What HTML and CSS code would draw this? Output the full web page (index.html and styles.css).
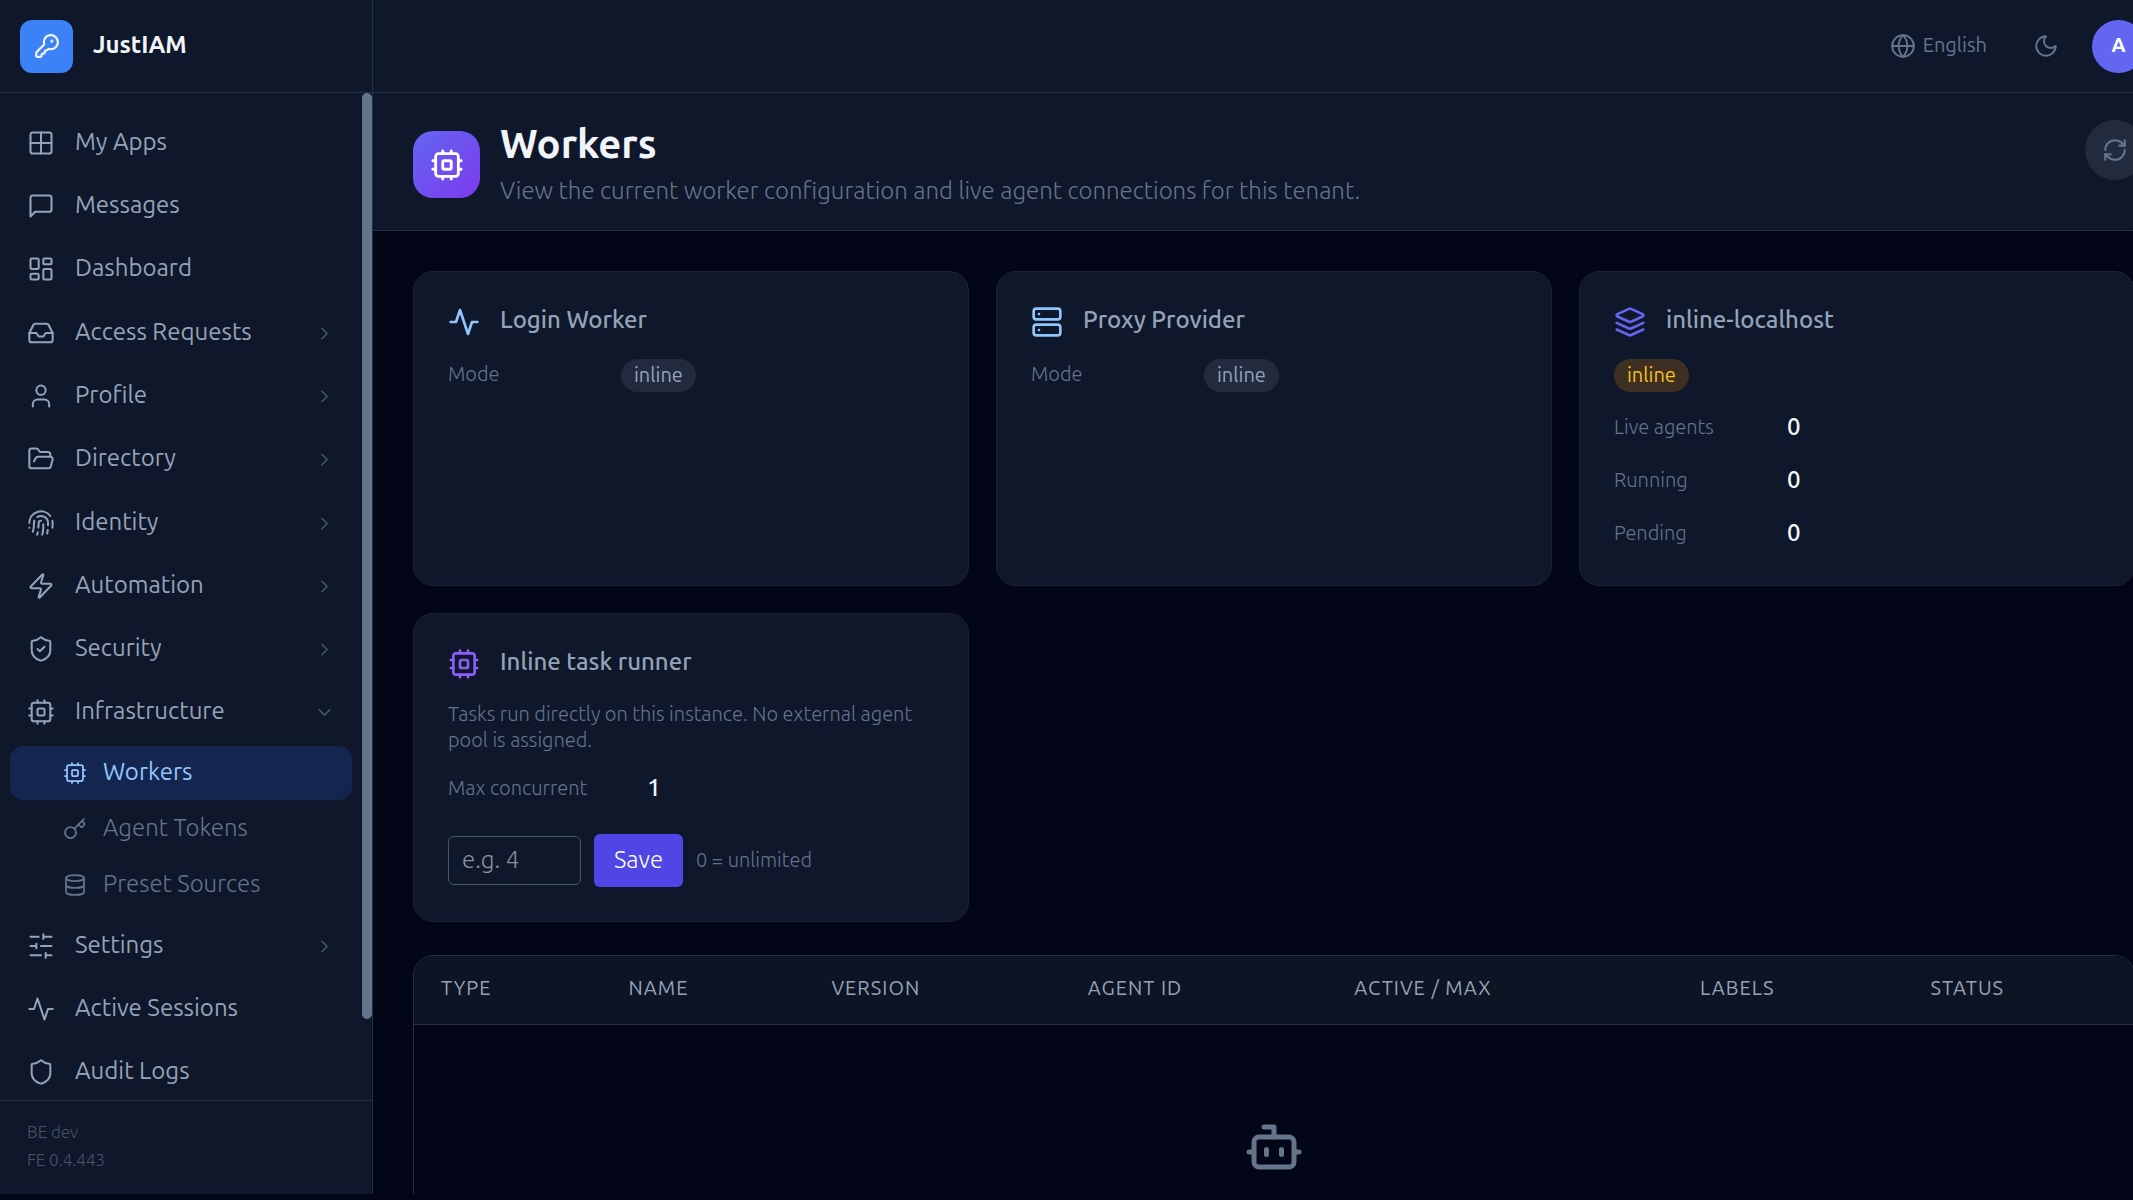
FILE: index.html
```html
<!DOCTYPE html>
<html lang="en">
<head>
<meta charset="utf-8">
<title>Workers - JustIAM</title>
<link rel="stylesheet" href="styles.css">
</head>
<body>
<svg class="sprite" aria-hidden="true">
  <symbol id="cpu" viewBox="0 0 24 24"><rect x="4" y="4" width="16" height="16" rx="2"/><rect x="9" y="9" width="6" height="6" rx="1"/><path d="M15 2v2M15 20v2M2 15h2M2 9h2M20 15h2M20 9h2M9 2v2M9 20v2"/></symbol>
  <symbol id="activity" viewBox="0 0 24 24"><path d="M22 12h-4l-3 9L9 3l-3 9H2"/></symbol>
  <symbol id="right" viewBox="0 0 24 24"><path d="m9 18 6-6-6-6"/></symbol>
  <symbol id="down" viewBox="0 0 24 24"><path d="m6 9 6 6 6-6"/></symbol>
</svg>
<div class="app">
  <aside class="sidebar">
    <div class="brand">
      <span class="logo"><svg class="icon i-26" viewBox="0 0 24 24"><path d="M2.586 17.414A2 2 0 0 0 2 18.828V21a1 1 0 0 0 1 1h3a1 1 0 0 0 1-1v-1a1 1 0 0 1 1-1h1a1 1 0 0 0 1-1v-1a1 1 0 0 1 1-1h.172a2 2 0 0 0 1.414-.586l.814-.814a6.5 6.5 0 1 0-4-4z"/><circle cx="16.5" cy="7.5" r=".5" fill="currentColor"/></svg></span>
      <span class="brand-name">JustIAM</span>
    </div>
    <nav class="nav">
      <ul class="nav-group">
        <li><a class="nav-item" href="#"><svg class="icon i-28" viewBox="0 0 24 24"><rect x="3" y="3" width="18" height="18" rx="2"/><path d="M3 12h18M12 3v18"/></svg><span>My Apps</span></a></li>
        <li><a class="nav-item" href="#"><svg class="icon i-28" viewBox="0 0 24 24"><path d="M21 15a2 2 0 0 1-2 2H7l-4 4V5a2 2 0 0 1 2-2h14a2 2 0 0 1 2 2z"/></svg><span>Messages</span></a></li>
        <li><a class="nav-item" href="#"><svg class="icon i-28" viewBox="0 0 24 24"><rect x="3" y="3" width="7" height="9" rx="1"/><rect x="14" y="3" width="7" height="5" rx="1"/><rect x="14" y="12" width="7" height="9" rx="1"/><rect x="3" y="16" width="7" height="5" rx="1"/></svg><span>Dashboard</span></a></li>
      </ul>
      <ul class="nav-group">
        <li><button type="button" class="nav-item"><svg class="icon i-28" viewBox="0 0 24 24"><path d="M22 12h-6l-2 3h-4l-2-3H2"/><path d="M5.45 5.11 2 12v6a2 2 0 0 0 2 2h16a2 2 0 0 0 2-2v-6l-3.45-6.89A2 2 0 0 0 16.76 4H7.24a2 2 0 0 0-1.79 1.11z"/></svg><span>Access Requests</span><svg class="icon chevron"><use href="#right"/></svg></button></li>
        <li><button type="button" class="nav-item"><svg class="icon i-28" viewBox="0 0 24 24"><path d="M19 21v-2a4 4 0 0 0-4-4H9a4 4 0 0 0-4 4v2"/><circle cx="12" cy="7" r="4"/></svg><span>Profile</span><svg class="icon chevron"><use href="#right"/></svg></button></li>
        <li><button type="button" class="nav-item"><svg class="icon i-28" viewBox="0 0 24 24"><path d="m6 14 1.5-2.9A2 2 0 0 1 9.24 10H20a2 2 0 0 1 1.94 2.5l-1.54 6a2 2 0 0 1-1.95 1.5H4a2 2 0 0 1-2-2V5a2 2 0 0 1 2-2h3.9a2 2 0 0 1 1.69.9l.81 1.2a2 2 0 0 0 1.67.9H18a2 2 0 0 1 2 2v2"/></svg><span>Directory</span><svg class="icon chevron"><use href="#right"/></svg></button></li>
      </ul>
      <ul class="nav-group">
        <li><button type="button" class="nav-item"><svg class="icon i-28" viewBox="0 0 24 24"><path d="M12 10a2 2 0 0 0-2 2c0 1.02-.1 2.51-.26 4"/><path d="M14 13.12c0 2.38 0 6.38-1 8.88"/><path d="M17.29 21.02c.12-.6.43-2.3.5-3.02"/><path d="M2 12a10 10 0 0 1 18-6"/><path d="M2 16h.01"/><path d="M21.8 16c.2-2 .131-5.354 0-6"/><path d="M5 19.5C5.5 18 6 15 6 12a6 6 0 0 1 .34-2"/><path d="M8.65 22c.21-.66.45-1.32.57-2"/><path d="M9 6.8a6 6 0 0 1 9 5.2v2"/></svg><span>Identity</span><svg class="icon chevron"><use href="#right"/></svg></button></li>
        <li><button type="button" class="nav-item"><svg class="icon i-28" viewBox="0 0 24 24"><path d="M4 14a1 1 0 0 1-.78-1.63l9.9-10.2a.5.5 0 0 1 .86.46l-1.92 6.02A1 1 0 0 0 13 10h7a1 1 0 0 1 .78 1.63l-9.9 10.2a.5.5 0 0 1-.86-.46l1.92-6.02A1 1 0 0 0 11 14z"/></svg><span>Automation</span><svg class="icon chevron"><use href="#right"/></svg></button></li>
        <li><button type="button" class="nav-item"><svg class="icon i-28" viewBox="0 0 24 24"><path d="M20 13c0 5-3.5 7.5-7.66 8.95a1 1 0 0 1-.67-.01C7.5 20.5 4 18 4 13V6a1 1 0 0 1 1-1c2 0 4.5-1.2 6.24-2.72a1.17 1.17 0 0 1 1.52 0C14.51 3.81 17 5 19 5a1 1 0 0 1 1 1z"/><path d="m9 12 2 2 4-4"/></svg><span>Security</span><svg class="icon chevron"><use href="#right"/></svg></button></li>
        <li><button type="button" class="nav-item" aria-expanded="true"><svg class="icon i-28"><use href="#cpu"/></svg><span>Infrastructure</span><svg class="icon chevron"><use href="#down"/></svg></button></li>
      </ul>
      <ul class="nav-group subs">
        <li><a class="nav-item sub active" href="#" aria-current="page"><svg class="icon i-24"><use href="#cpu"/></svg><span>Workers</span></a></li>
        <li><a class="nav-item sub" href="#"><svg class="icon i-24" viewBox="0 0 24 24"><path d="m15.5 7.5 2.3 2.3a1 1 0 0 0 1.4 0l2.1-2.1a1 1 0 0 0 0-1.4L19 4"/><path d="m21 2-9.6 9.6"/><circle cx="7.5" cy="15.5" r="5.5"/></svg><span>Agent Tokens</span></a></li>
        <li><a class="nav-item sub" href="#"><svg class="icon i-24" viewBox="0 0 24 24"><ellipse cx="12" cy="5" rx="9" ry="3"/><path d="M3 5v14a9 3 0 0 0 18 0V5"/><path d="M3 12a9 3 0 0 0 18 0"/></svg><span>Preset Sources</span></a></li>
      </ul>
      <ul class="nav-group">
        <li><button type="button" class="nav-item"><svg class="icon i-28" viewBox="0 0 24 24"><path d="M21 4h-7M10 4H3M21 12h-9M8 12H3M21 20h-5M12 20H3M14 2v4M8 10v4M16 18v4"/></svg><span>Settings</span><svg class="icon chevron"><use href="#right"/></svg></button></li>
        <li><a class="nav-item" href="#"><svg class="icon i-28"><use href="#activity"/></svg><span>Active Sessions</span></a></li>
        <li><a class="nav-item" href="#"><svg class="icon i-28" viewBox="0 0 24 24"><path d="M20 13c0 5-3.5 7.5-7.66 8.95a1 1 0 0 1-.67-.01C7.5 20.5 4 18 4 13V6a1 1 0 0 1 1-1c2 0 4.5-1.2 6.24-2.72a1.17 1.17 0 0 1 1.52 0C14.51 3.81 17 5 19 5a1 1 0 0 1 1 1z"/></svg><span>Audit Logs</span></a></li>
      </ul>
      <div class="scroll-thumb"></div>
    </nav>
    <div class="versions"><span>BE dev</span><span>FE 0.4.443</span></div>
  </aside>

  <div class="content">
    <header class="topbar">
      <button type="button" class="language"><svg class="icon i-26" viewBox="0 0 24 24"><circle cx="12" cy="12" r="10"/><path d="M12 2a14.5 14.5 0 0 0 0 20 14.5 14.5 0 0 0 0-20"/><path d="M2 12h20"/></svg><span>English</span></button>
      <button type="button" class="theme" aria-label="Toggle theme"><svg class="icon i-26" viewBox="0 0 24 24"><path d="M12 3a6 6 0 0 0 9 9 9 9 0 1 1-9-9Z"/></svg></button>
      <button type="button" class="avatar">A</button>
    </header>

    <section class="page-head">
      <span class="page-icon"><svg class="icon i-34"><use href="#cpu"/></svg></span>
      <div class="page-text">
        <h1>Workers</h1>
        <p>View the current worker configuration and live agent connections for this tenant.</p>
      </div>
      <button type="button" class="refresh" aria-label="Refresh"><svg class="icon i-26" viewBox="0 0 24 24"><path d="M3 12a9 9 0 0 1 9-9 9.75 9.75 0 0 1 6.74 2.74L21 8"/><path d="M21 3v5h-5"/><path d="M21 12a9 9 0 0 1-9 9 9.75 9.75 0 0 1-6.74-2.74L3 16"/><path d="M8 16H3v5"/></svg></button>
    </section>

    <main class="main">
      <div class="cards">
        <section class="card">
          <h2><svg class="icon i-32 sky"><use href="#activity"/></svg>Login Worker</h2>
          <div class="row"><span class="key">Mode</span><span class="pill">inline</span></div>
        </section>
        <section class="card">
          <h2><svg class="icon i-32 sky" viewBox="0 0 24 24"><rect x="2" y="2" width="20" height="8" rx="2"/><rect x="2" y="14" width="20" height="8" rx="2"/><path d="M6 6h.01M6 18h.01"/></svg>Proxy Provider</h2>
          <div class="row"><span class="key">Mode</span><span class="pill">inline</span></div>
        </section>
        <section class="card">
          <h2><svg class="icon i-32 indigo" viewBox="0 0 24 24"><path d="m12.83 2.18a2 2 0 0 0-1.66 0L2.6 6.08a1 1 0 0 0 0 1.83l8.58 3.91a2 2 0 0 0 1.66 0l8.58-3.9a1 1 0 0 0 0-1.83Z"/><path d="m22 12.65-9.17 4.16a2 2 0 0 1-1.66 0L2 12.65"/><path d="m22 17.65-9.17 4.16a2 2 0 0 1-1.66 0L2 17.65"/></svg>inline-localhost</h2>
          <div class="row"><span class="pill amber">inline</span></div>
          <div class="row"><span class="key">Live agents</span><strong>0</strong></div>
          <div class="row"><span class="key">Running</span><strong>0</strong></div>
          <div class="row"><span class="key">Pending</span><strong>0</strong></div>
        </section>
        <section class="card">
          <h2><svg class="icon i-32 violet"><use href="#cpu"/></svg>Inline task runner</h2>
          <p class="note">Tasks run directly on this instance. No external agent pool is assigned.</p>
          <div class="row wide"><span>Max concurrent</span><strong>1</strong></div>
          <form class="limit">
            <input type="text" inputmode="numeric" placeholder="e.g. 4" aria-label="Max concurrent">
            <button type="button">Save</button>
            <span>0 = unlimited</span>
          </form>
        </section>
      </div>

      <div class="table-card">
        <table>
          <colgroup><col class="c-type"><col class="c-name"><col class="c-version"><col class="c-agent"><col class="c-active"><col class="c-labels"><col></colgroup>
          <thead><tr><th>TYPE</th><th>NAME</th><th>VERSION</th><th>AGENT ID</th><th>ACTIVE / MAX</th><th>LABELS</th><th>STATUS</th></tr></thead>
          <tbody><tr><td colspan="7"><svg class="icon i-60" viewBox="0 0 24 24"><path d="M12 8V4H8"/><rect x="4" y="8" width="16" height="12" rx="2"/><path d="M2 14h2M20 14h2M15 13v2M9 13v2"/></svg></td></tr></tbody>
        </table>
      </div>
    </main>
  </div>
</div>
</body>
</html>
```

FILE: styles.css
```css
* { box-sizing: border-box; }

body {
  margin: 0;
  height: 100vh;
  overflow: hidden;
  background: #020617;
  color: #94a3b8;
  font: 300 20px/26px Ubuntu, "Open Sans", "Noto Sans", sans-serif;
}

h1, h2, p, ul { margin: 0; padding: 0; font-weight: inherit; }
ul { list-style: none; }
a { color: inherit; text-decoration: none; }
button, input { font: inherit; color: inherit; border: 0; background: none; padding: 0; margin: 0; }

.sprite { position: absolute; width: 0; height: 0; }
.icon { flex: none; fill: none; stroke: currentColor; stroke-width: 2; stroke-linecap: round; stroke-linejoin: round; }
.i-24 { width: 24px; height: 24px; }
.i-26 { width: 26px; height: 26px; }
.i-28 { width: 28px; height: 28px; }
.i-32 { width: 32px; height: 32px; }
.i-34 { width: 34px; height: 34px; }
.i-60 { width: 60px; height: 60px; }

/* The content column runs past the right edge of the window. */
.app { display: flex; height: calc(100vh - 6px); margin-right: -42px; }

/* Sidebar */
.sidebar {
  flex: none;
  width: 373px;
  display: flex;
  flex-direction: column;
  background: #0f172a;
  border-right: 1px solid #232f42;
}
.brand { flex: none; display: flex; align-items: center; gap: 20px; height: 93px; padding: 0 20px; border-bottom: 1px solid #232f42; }
.logo { display: grid; place-items: center; width: 53px; height: 53px; border-radius: 12px; background: #3b82f6; color: #f1f5f9; }
.brand-name { padding-bottom: 2px; color: #f1f5f9; font-size: 24px; font-weight: 700; }

.nav { position: relative; flex: 1; min-height: 0; overflow: hidden; display: flex; flex-direction: column; gap: 4px; padding: 20px 20px 0 10px; }
.nav-group { display: flex; flex-direction: column; gap: 3px; }
.nav-group.subs { gap: 2px; }
.nav-item {
  display: flex;
  align-items: center;
  gap: 20px;
  width: 100%;
  height: 60px;
  padding: 0 17px;
  border-radius: 13px;
  font-size: 24px;
  font-weight: 400;
}
.nav-item span { padding-bottom: 3px; }
.nav-item .icon { stroke-width: 1.75; }
.nav-item .chevron { width: 21px; height: 21px; margin-left: auto; color: #475569; }
.nav-item.sub { height: 54px; padding-left: 53px; gap: 16px; color: #64748b; font-weight: 300; }
.nav-item.active { background: #14264f; color: #93c5fd; font-weight: 400; }
.scroll-thumb { position: absolute; top: 0; right: 0; width: 10px; height: 92%; border-radius: 5px; background: #64748b; }

.versions { flex: none; display: flex; flex-direction: column; gap: 2px; padding: 18px 27px 21px; border-top: 1px solid #232f42; color: #475569; font-size: 17px; }

/* Top bar */
.content { flex: 1; min-width: 0; display: flex; flex-direction: column; }
.topbar { flex: none; display: flex; align-items: center; justify-content: flex-end; height: 93px; padding-right: 30px; background: #0f172a; border-bottom: 1px solid #232f42; color: #64748b; }
.language { display: flex; align-items: center; gap: 7px; margin-right: 46px; font-weight: 400; }
.language span { padding-bottom: 2px; }
.topbar .icon { stroke-width: 1.75; }
.theme { display: grid; margin-right: 33px; }
.avatar { width: 53px; height: 53px; padding-bottom: 2px; border-radius: 50%; background: #6366f1; color: #fff; font-weight: 700; }

/* Page heading */
.page-head { flex: none; display: flex; align-items: center; gap: 20px; height: 138px; padding: 0 30px 0 40px; background: #0f172a; border-bottom: 1px solid #232f42; }
.page-icon { display: grid; place-items: center; width: 67px; height: 67px; margin-top: 6px; border-radius: 20px; background: linear-gradient(135deg, #6366f1, #7c3aed); color: #fff; }
.page-text { flex: 1; padding-top: 5px; }
h1 { color: #f1f5f9; font-size: 40px; line-height: 54px; font-weight: 700; }
.page-text p { color: #64748b; font-size: 24px; line-height: 40px; }
.refresh { align-self: flex-start; display: grid; place-items: center; width: 60px; height: 60px; margin-top: 27px; border-radius: 50%; background: #222b3e; color: #64748b; }

/* Cards */
.main { flex: 1; min-height: 0; overflow: hidden; padding: 40px 40px 0; }
.cards { display: grid; grid-template-columns: repeat(3, 1fr); gap: 27px; }
.card { display: flex; flex-direction: column; gap: 20px; padding: 34px; border: 1px solid #1a2436; border-radius: 20px; background: #0f172a; }
.card h2 { display: flex; align-items: flex-start; gap: 20px; height: 33px; font-size: 24px; line-height: 28px; font-weight: 500; }
.sky { color: #93c5fd; }
.indigo { color: #6366f1; }
.violet { color: #8b5cf6; }
.row { display: flex; align-items: center; height: 33px; color: #64748b; }
.row > :not(.pill) { padding-bottom: 3px; }
.key { width: 173px; }
.wide { gap: 60px; }
.row strong { color: #f1f5f9; font-size: 24px; font-weight: 500; }
.pill { padding: 3px 13px 4px; border-radius: 17px; background: #222b3e; color: #94a3b8; font-weight: 400; }
.pill.amber { background: #3d3023; color: #fbbf24; }
.note { color: #64748b; }
.limit { display: flex; align-items: center; gap: 13px; margin-top: 8px; color: #64748b; }
.limit span { padding-bottom: 2px; }
.limit input { width: 133px; height: 49px; padding: 0 13px 2px; border: 1px solid #475569; border-radius: 6px; font-size: 24px; color: #f1f5f9; }
.limit input::placeholder { color: #8a929c; opacity: 1; }
.limit button { width: 89px; height: 53px; padding-bottom: 2px; border-radius: 6px; background: #4f46e5; color: #fff; font-size: 24px; }

/* Workers table */
.table-card { margin-top: 33px; height: 400px; border: 1px solid #232f42; border-radius: 20px; overflow: hidden; }
table { width: 100%; border-collapse: collapse; table-layout: fixed; }
.c-type { width: 10.9%; }
.c-name { width: 11.8%; }
.c-version { width: 14.9%; }
.c-agent { width: 15.5%; }
.c-active { width: 20.1%; }
.c-labels { width: 13.4%; }
th { height: 68px; padding: 0 27px 3px; text-align: left; background: #0d1424; border-bottom: 1px solid #232f42; font-size: 20px; font-weight: 400; letter-spacing: 1px; }
td { padding: 92px 0 0; text-align: center; color: #64748b; }
```
